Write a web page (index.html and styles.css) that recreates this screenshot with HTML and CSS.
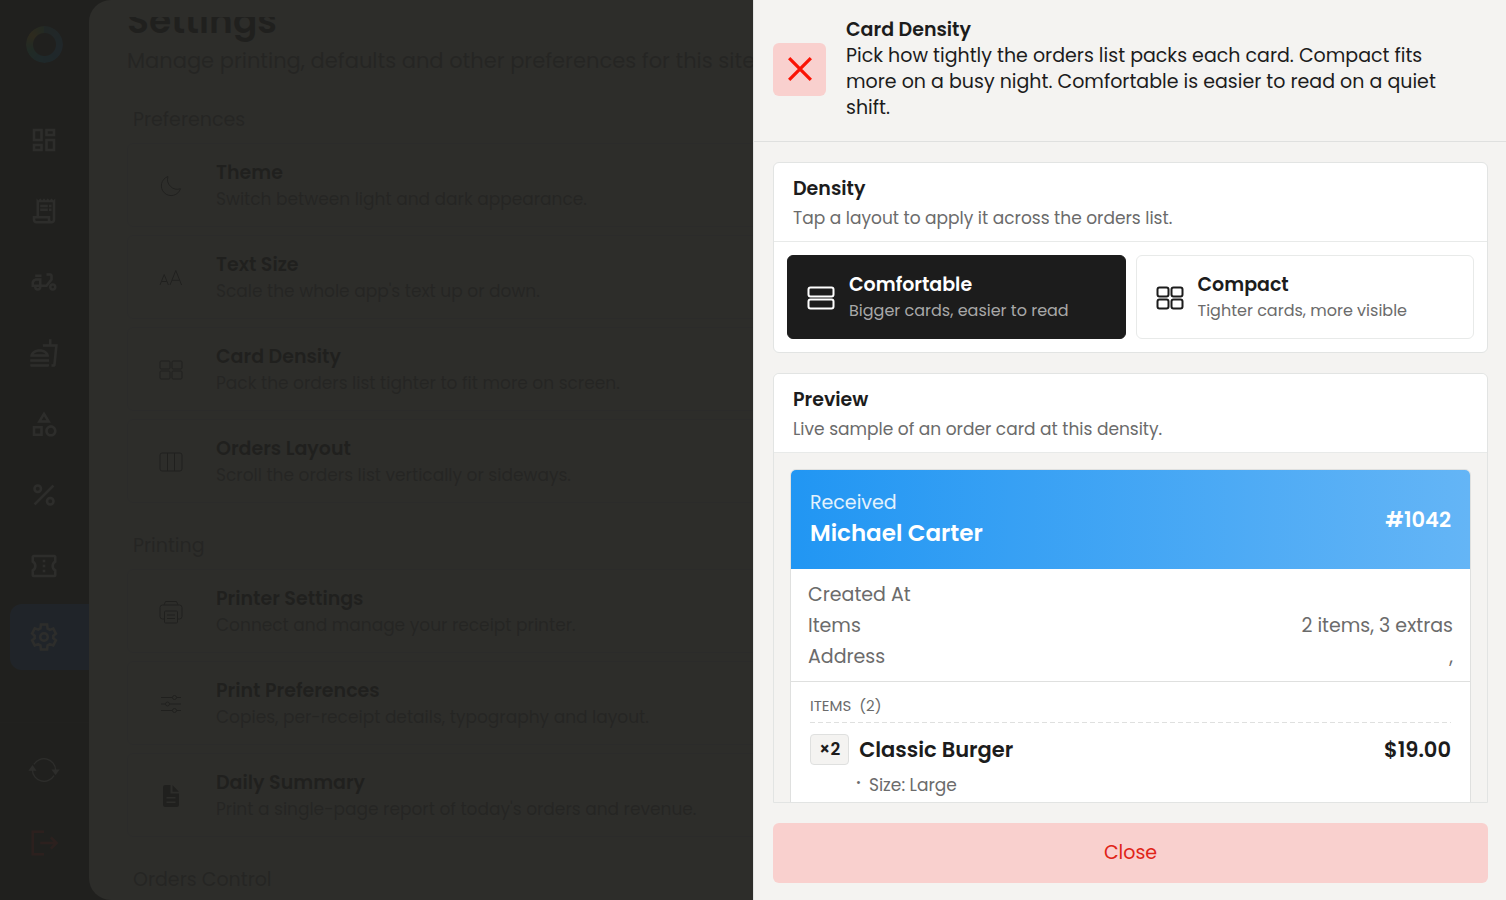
FILE: index.html
```
<!DOCTYPE html>
<html lang="en">
<head>
  <meta charset="UTF-8">
  <title>Settings</title>
  <meta name="viewport" content="width=device-width, initial-scale=1.0">
  <link rel="stylesheet" href="styles.css">
</head>
<body>
  <div class="app">
    <!-- Sidebar -->
    <aside class="sidebar">
      <a class="logo" href="#" aria-label="Home"></a>
      <nav class="nav">
        <a class="nav-item" href="#" aria-label="Dashboard">
          <svg viewBox="0 0 24 24"><path d="M19 5v2h-4V5h4M9 5v6H5V5h4m10 8v6h-4v-6h4M9 17v2H5v-2h4M21 3h-8v6h8V3zM11 3H3v10h8V3zm10 8h-8v10h8V11zm-10 4H3v6h8v-6z"/></svg>
        </a>
        <a class="nav-item" href="#" aria-label="Orders">
          <svg viewBox="0 0 24 24"><path d="M19.5 3.5 18 2l-1.5 1.5L15 2l-1.5 1.5L12 2l-1.5 1.5L9 2 7.5 3.5 6 2v14H3v3c0 1.66 1.34 3 3 3h12c1.66 0 3-1.34 3-3V2l-1.5 1.5zM15 20H6c-.55 0-1-.45-1-1v-1h10v2zm4-1c0 .55-.45 1-1 1s-1-.45-1-1v-3H8V5h11v14zM9 7h6v2H9zM16 7h2v2h-2zM9 10h6v2H9zM16 10h2v2h-2z"/></svg>
        </a>
        <a class="nav-item" href="#" aria-label="Delivery">
          <svg viewBox="0 0 24 24"><path d="M19 7c0-1.1-.9-2-2-2h-3v2h3v2.65L13.52 14H10V9H6c-2.21 0-4 1.79-4 4v3h2c0 1.66 1.34 3 3 3s3-1.34 3-3h4.48L19 10.35V7zM8 14H4v-1c0-1.1.9-2 2-2h2v3zm-1 3c-.55 0-1-.45-1-1h2c0 .55-.45 1-1 1zM5 6h5v2H5zM19 13c-1.66 0-3 1.34-3 3s1.34 3 3 3 3-1.34 3-3-1.34-3-3-3zm0 4c-.55 0-1-.45-1-1s.45-1 1-1 1 .45 1 1-.45 1-1 1z"/></svg>
        </a>
        <a class="nav-item" href="#" aria-label="Menu">
          <svg viewBox="0 0 24 24"><path d="M1 21.98c0 .56.45 1.01 1.01 1.01H15c.56 0 1.01-.45 1.01-1.01V21H1v.98zM8.5 8.99C4.75 8.99 1 11 1 15h15c0-4-3.75-6.01-7.5-6.01zM3.62 13c1.11-1.55 3.47-2.01 4.88-2.01s3.77.46 4.88 2.01H3.62zM1 17h15v2H1zM18 5V1h-2v4h-5l.23 2h9.56l-1.4 14H18v2h1.72c.84 0 1.53-.65 1.63-1.47L23 5h-5z"/></svg>
        </a>
        <a class="nav-item" href="#" aria-label="Categories">
          <svg viewBox="0 0 24 24"><path d="M12 2l-5.5 9h11L12 2zm0 3.84L13.93 9h-3.87L12 5.84zM17.5 13c-2.49 0-4.5 2.01-4.5 4.5s2.01 4.5 4.5 4.5 4.5-2.01 4.5-4.5-2.01-4.5-4.5-4.5zm0 7c-1.38 0-2.5-1.12-2.5-2.5s1.12-2.5 2.5-2.5 2.5 1.12 2.5 2.5-1.12 2.5-2.5 2.5zM3 21.5h8v-8H3v8zm2-6h4v4H5v-4z"/></svg>
        </a>
        <a class="nav-item" href="#" aria-label="Discounts">
          <svg class="line" viewBox="0 0 24 24"><path d="M4.500 19.500 19.500 4.500"/><circle cx="7" cy="7" r="2.600"/><circle cx="17" cy="17" r="2.600"/></svg>
        </a>
        <a class="nav-item" href="#" aria-label="Vouchers">
          <svg class="line" viewBox="0 0 24 24"><path d="M4 4h16a1 1 0 0 1 1 1v3.500a4 4 0 0 0 0 7V19a1 1 0 0 1-1 1H4a1 1 0 0 1-1-1v-3.500a4 4 0 0 0 0-7V5a1 1 0 0 1 1-1z"/><path d="M12 7v2M12 11v2M12 15v2"/></svg>
        </a>
        <a class="nav-item active" href="#" aria-label="Settings" aria-current="page">
          <svg class="line" viewBox="0 0 24 24"><path d="M19.430 12.980c.04-.32.07-.64.07-.98s-.03-.66-.07-.98l2.110-1.650-2.120-4.100-2.830 1c-.52-.4-1.080-.73-1.690-.98L14.460 2h-4.920l-.41 3.070c-.61.25-1.170.59-1.690.98l-2.830-1-2.120 4.100 2.080 1.870c-.04.32-.07.65-.07.98s.03.66.07.98L2.490 14.630l2.120 4.100 2.830-1c.52.4 1.080.73 1.690.98l.41 3.290h4.920l.41-3.290c.61-.25 1.170-.59 1.690-.98l2.830 1 2.120-4.100z"/><circle cx="12" cy="12" r="3"/></svg>
        </a>
      </nav>
      <div class="nav-bottom">
        <a class="nav-item" href="#" aria-label="Refresh">
          <svg class="line thin" viewBox="0 0 24 24"><path d="M4 7.500A9.300 9.300 0 0 1 21.300 12M20 16.500A9.300 9.300 0 0 1 2.700 12"/><path class="solid" d="M18 11.500h6.500L21.200 16zM-.5 12.500H6L2.800 8z"/></svg>
        </a>
        <a class="nav-item logout" href="#" aria-label="Log out">
          <svg class="line" viewBox="0 0 24 24"><path d="M12 3H3v18h9M9 12h13M17.500 7.500 22 12l-4.500 4.500"/></svg>
        </a>
      </div>
    </aside>

    <!-- Settings page -->
    <main class="main">
      <div class="main-scroll">
        <h1>Settings</h1>
        <p class="lead">Manage printing, defaults and other preferences for this site.</p>

        <section class="group">
          <h2>Preferences</h2>
          <button class="setting">
            <svg viewBox="0 0 24 24"><path d="M9 2.500a9.800 9.800 0 0 0 12.500 12.200A9.800 9.800 0 1 1 9 2.500z"/></svg>
            <span><b>Theme</b><small>Switch between light and dark appearance.</small></span>
          </button>
          <button class="setting">
            <svg viewBox="0 0 24 24"><path d="M1 19 5.200 8.500 9.400 19M2.500 15.500h5.400M11 19l5.800-14.500L22.600 19M13 14.300h7.600"/></svg>
            <span><b>Text Size</b><small>Scale the whole app's text up or down.</small></span>
          </button>
          <button class="setting">
            <svg viewBox="0 0 24 24"><rect x="1" y="3" width="10" height="8" rx="1"/><rect x="13" y="3" width="10" height="8" rx="1"/><rect x="1" y="13" width="10" height="8" rx="1"/><rect x="13" y="13" width="10" height="8" rx="1"/></svg>
            <span><b>Card Density</b><small>Pack the orders list tighter to fit more on screen.</small></span>
          </button>
          <button class="setting">
            <svg viewBox="0 0 24 24"><rect x="1" y="3" width="22" height="18" rx="2"/><path d="M8.500 3v18M15.500 3v18"/></svg>
            <span><b>Orders Layout</b><small>Scroll the orders list vertically or sideways.</small></span>
          </button>
        </section>

        <section class="group">
          <h2>Printing</h2>
          <button class="setting">
            <svg viewBox="0 0 24 24"><path d="M5 19H3.500A2.500 2.500 0 0 1 1 16.500V7.500A2.500 2.500 0 0 1 3.500 5h17A2.500 2.500 0 0 1 23 7.500v9a2.500 2.500 0 0 1-2.500 2.500H19M5 5l1.500-3.500h11L19 5"/><rect x="5.500" y="11" width="13" height="12" rx="1"/><path d="M8 15h8M8 18.500h8"/></svg>
            <span><b>Printer Settings</b><small>Connect and manage your receipt printer.</small></span>
          </button>
          <button class="setting">
            <svg viewBox="0 0 24 24"><path d="M2 5.500h11.500M17.500 5.500H22M2 12h4.500M10.500 12H22M2 18.500h11.500M17.500 18.500H22"/><circle cx="15.500" cy="5.500" r="2"/><circle cx="8.500" cy="12" r="2"/><circle cx="15.500" cy="18.500" r="2"/></svg>
            <span><b>Print Preferences</b><small>Copies, per-receipt details, typography and layout.</small></span>
          </button>
          <button class="setting">
            <svg viewBox="0 0 24 24"><path class="solid" fill-rule="evenodd" d="M6 1h5.500v8.500H20V21a2 2 0 0 1-2 2H6a2 2 0 0 1-2-2V3a2 2 0 0 1 2-2zm1.500 12v1.500h9V13zm0 4.500V19h9v-1.500zM13.500 1 20 7.800h-6.500z"/></svg>
            <span><b>Daily Summary</b><small>Print a single-page report of today's orders and revenue.</small></span>
          </button>
        </section>

        <section class="group">
          <h2>Orders Control</h2>
        </section>
      </div>
    </main>
  </div>

  <div class="overlay"></div>

  <!-- Card density drawer -->
  <div class="drawer" role="dialog" aria-labelledby="drawer-title">
    <header class="drawer-header">
      <button class="close-icon" aria-label="Close">
        <svg viewBox="0 0 24 24"><path d="M2 2l20 20M22 2 2 22"/></svg>
      </button>
      <div class="drawer-text">
        <h2 id="drawer-title">Card Density</h2>
        <p>Pick how tightly the orders list packs each card. Compact fits more on a busy night. Comfortable is easier to read on a quiet shift.</p>
      </div>
    </header>

    <div class="drawer-body">
      <section class="panel">
        <div class="panel-header">
          <h3>Density</h3>
          <p>Tap a layout to apply it across the orders list.</p>
        </div>
        <div class="options">
          <button class="option selected" aria-pressed="true">
            <svg viewBox="0 0 28 24"><rect x="1.500" y="1.500" width="25" height="9" rx="2"/><rect x="1.500" y="13.500" width="25" height="9" rx="2"/></svg>
            <span><b>Comfortable</b><small>Bigger cards, easier to read</small></span>
          </button>
          <button class="option" aria-pressed="false">
            <svg viewBox="0 0 28 24"><rect x="1.500" y="1.500" width="11" height="9" rx="2"/><rect x="15.500" y="1.500" width="11" height="9" rx="2"/><rect x="1.500" y="13.500" width="11" height="9" rx="2"/><rect x="15.500" y="13.500" width="11" height="9" rx="2"/></svg>
            <span><b>Compact</b><small>Tighter cards, more visible</small></span>
          </button>
        </div>
      </section>

      <section class="panel preview">
        <div class="panel-header">
          <h3>Preview</h3>
          <p>Live sample of an order card at this density.</p>
        </div>
        <div class="preview-body">
          <article class="order">
            <div class="order-header">
              <div>
                <div class="order-status">Received</div>
                <div class="order-name">Michael Carter</div>
              </div>
              <div class="order-number">#1042</div>
            </div>
            <dl class="order-info">
              <div><dt>Created At</dt><dd></dd></div>
              <div><dt>Items</dt><dd>2 items, 3 extras</dd></div>
              <div><dt>Address</dt><dd>,</dd></div>
            </dl>
            <div class="order-items">
              <h4><span>ITEMS</span><span>(2)</span></h4>
              <div class="item">
                <span class="qty">×2</span>
                <span class="item-name">Classic Burger</span>
                <span class="item-price">$19.00</span>
              </div>
              <ul class="extras">
                <li>Size: Large</li>
              </ul>
            </div>
          </article>
        </div>
      </section>
    </div>

    <footer class="drawer-footer">
      <button class="close-button">Close</button>
    </footer>
  </div>
</body>
</html>
```

FILE: styles.css
```
* {
  box-sizing: border-box;
}
body {
  margin: 0;
  font-family: Poppins, Inter, "Open Sans", sans-serif;
  font-size: 19px;
  line-height: 26px;
  color: #1c1c1c;
  background: #1c1c1c;
  overflow: hidden;
}
h1, h2, h3, h4, p, dl, dd, ul {
  margin: 0;
  padding: 0;
}
button {
  font: inherit;
  color: inherit;
  text-align: left;
  cursor: pointer;
}
b {
  display: block;
  font-weight: 600;
}
small {
  display: block;
  font-size: 17px;
  color: #757575;
}
svg {
  flex: none;
  fill: none;
  stroke: currentColor;
  overflow: visible;
}
.solid {
  fill: currentColor;
  stroke: none;
}

.app {
  display: flex;
  height: 100vh;
}

/* sidebar */
.sidebar {
  width: 89px;
  flex: none;
  display: flex;
  flex-direction: column;
  padding-top: 26px;
}
.logo {
  width: 37px;
  height: 37px;
  margin: 0 26px 44px;
  border-radius: 50%;
  background: conic-gradient(#2f8f9f, #1789e9 30%, #00b0e0 55%, #2fce8a 70%, #ffc010 85%, #4fbf6f);
  -webkit-mask: radial-gradient(circle, transparent 11px, #000 12px);
  mask: radial-gradient(circle, transparent 11px, #000 12px);
}
.nav {
  display: flex;
  flex-direction: column;
  gap: 5px;
}
.nav-item {
  height: 66px;
  margin-left: 10px;
  padding-right: 11px;
  display: flex;
  align-items: center;
  justify-content: center;
  color: #f4f4f4;
  border-radius: 12px 0 0 12px;
}
.nav-item svg {
  width: 30px;
  height: 30px;
  fill: currentColor;
  stroke: none;
}
.nav-item .line {
  fill: none;
  stroke: currentColor;
  stroke-width: 2;
}
.nav-item .thin {
  stroke-width: 1;
}
.nav-item .solid {
  stroke: none;
  fill: currentColor;
}
.nav-item.active {
  background: #1565d8;
}
.nav-item.logout {
  color: #e01f1f;
}
.nav-bottom {
  margin-top: auto;
  padding: 14px 0 24px;
  display: flex;
  flex-direction: column;
  gap: 7px;
  border-top: 1px solid #2a2a2a;
}

/* settings page */
.main {
  flex: 1;
  min-width: 0;
  padding: 17px 38px 0;
  background: #f4f3e8;
  border-radius: 22px 0 0 22px;
}
.main-scroll {
  height: 100%;
  overflow: hidden;
}
h1 {
  margin-top: -20px;
  font-size: 36px;
  line-height: 48px;
  font-weight: 600;
}
.lead {
  font-size: 21px;
  line-height: 32px;
  color: #757575;
}
.group {
  display: flex;
  flex-direction: column;
  gap: 8px;
  margin-top: 28px;
}
.group h2 {
  padding-left: 6px;
  font-size: 19px;
  line-height: 30px;
  font-weight: 400;
  color: #757575;
}
.setting {
  height: 84px;
  padding: 2px 31px 0;
  display: flex;
  align-items: center;
  gap: 33px;
  background: none;
  border: 1px solid #d8d8e0;
  border-radius: 6px;
}
.setting svg {
  width: 24px;
  height: 24px;
}

.overlay {
  position: fixed;
  inset: 0;
  background: rgba(33, 33, 31, 0.944);
}

/* drawer */
.drawer {
  position: fixed;
  top: 0;
  right: 0;
  bottom: 0;
  width: 50%;
  display: flex;
  flex-direction: column;
  background: #f4f3f1;
  border-left: 1px solid #e2e3e2;
}
.drawer-header {
  padding: 17px 50px 20px 19px;
  display: flex;
  align-items: center;
  gap: 20px;
  border-bottom: 1px solid #dfe0df;
}
.drawer-header h2 {
  font-size: 19px;
  font-weight: 600;
}
.close-icon {
  flex: none;
  width: 53px;
  height: 53px;
  padding: 0;
  display: flex;
  align-items: center;
  justify-content: center;
  background: #f9d0ce;
  border: none;
  border-radius: 6px;
  color: #fa1405;
}
.close-icon svg {
  width: 26px;
  height: 26px;
  stroke-width: 3;
}
.drawer-body {
  flex: 1;
  min-height: 0;
  padding: 20px 18px 0 19px;
  display: flex;
  flex-direction: column;
  gap: 20px;
}
.panel {
  background: #fff;
  border: 1px solid #e2e4e3;
  border-radius: 6px;
}
.panel-header {
  padding: 13px 19px 10px;
  border-bottom: 1px solid #e8eae9;
}
.panel-header h3 {
  margin-bottom: 3px;
  font-size: 19px;
  font-weight: 600;
}
.panel-header p {
  font-size: 17px;
  color: #6b6b6b;
}
.options {
  display: flex;
  gap: 10px;
  padding: 13px;
}
.option {
  flex: 1;
  height: 84px;
  padding: 2px 19px 0;
  display: flex;
  align-items: center;
  gap: 14px;
  background: #fff;
  border: 1px solid #e8eae9;
  border-radius: 6px;
}
.option svg {
  width: 28px;
  height: 24px;
  stroke-width: 2;
}
.option small {
  font-size: 16px;
  color: #6b6b6b;
}
.option.selected {
  background: #1c1c1c;
  border-color: #1c1c1c;
  color: #fff;
}
.option.selected small {
  color: #a8a8a8;
}
.preview {
  flex: 1;
  min-height: 0;
  overflow: hidden;
  background: #f4f3f1;
  border-radius: 6px 6px 0 0;
}
.preview .panel-header {
  background: #fff;
}
.preview-body {
  padding: 16px;
}

/* order card */
.order {
  background: #fff;
  border: 1px solid #dfe0df;
  border-radius: 6px;
  overflow: hidden;
}
.order-header {
  height: 99px;
  padding: 1px 19px 0;
  display: flex;
  align-items: center;
  justify-content: space-between;
  background: linear-gradient(90deg, #2196f3, #64b5f6);
  color: #fff;
}
.order-status {
  color: #e3f2fd;
}
.order-name {
  font-size: 23px;
  line-height: 34px;
  font-weight: 600;
}
.order-number {
  font-size: 21px;
  font-weight: 600;
}
.order-info {
  padding: 10px 17px 9px;
  color: #6b6b6b;
  border-bottom: 1px solid #dfe0df;
}
.order-info div {
  display: flex;
  justify-content: space-between;
  line-height: 31px;
}
.order-items {
  padding: 11px 19px 20px;
}
/* the dashed rule is a gradient so the dashes stay 5px long */
.order-items h4 {
  display: flex;
  gap: 8px;
  padding-bottom: 4px;
  font-size: 15px;
  font-weight: 400;
  color: #6b6b6b;
  background: repeating-linear-gradient(90deg, #dfe0df 0 5px, transparent 5px 8px) left bottom / 100% 1px no-repeat;
}
.item {
  display: flex;
  align-items: center;
  gap: 10px;
  margin-top: 11px;
  font-size: 21px;
  font-weight: 600;
}
.qty {
  height: 31px;
  padding: 0 8px;
  font-size: 17px;
  line-height: 29px;
  background: #f4f3f1;
  border: 1px solid #dfe0df;
  border-radius: 4px;
}
.item-price {
  margin-left: auto;
}
.extras {
  margin-top: 7px;
  padding-left: 46px;
  list-style: none;
  font-size: 17px;
  color: #6b6b6b;
}
.extras li {
  display: flex;
  gap: 8px;
}
.extras li::before {
  content: "•";
  font-size: 12px;
  line-height: 22px;
}

.drawer-footer {
  padding: 20px 18px 17px 19px;
}
.close-button {
  width: 100%;
  height: 60px;
  background: #f9d0ce;
  border: none;
  border-radius: 6px;
  color: #e02418;
  text-align: center;
}
```
